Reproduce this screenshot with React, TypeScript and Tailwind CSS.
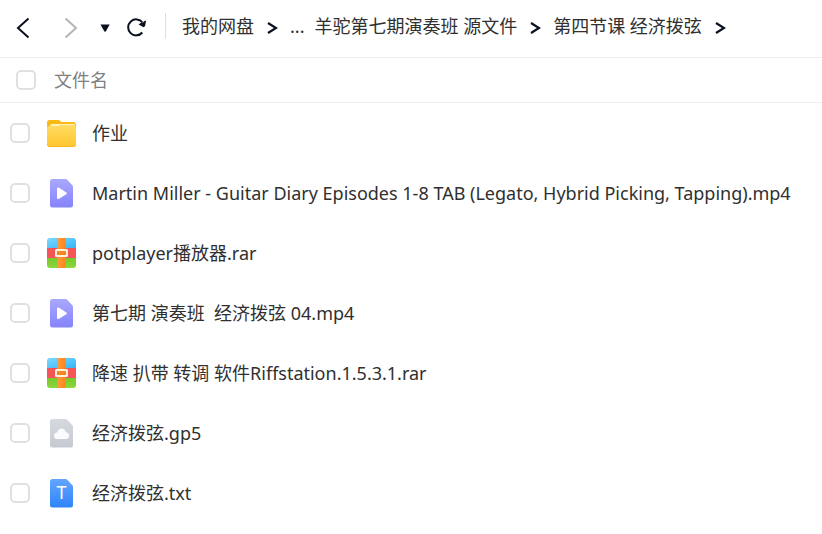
import { useState } from "react";

type FileKind = "folder" | "video" | "archive" | "unknown" | "text";

interface FileItem {
  name: string;
  kind: FileKind;
}

const FILES: FileItem[] = [
  { name: "作业", kind: "folder" },
  { name: "Martin Miller - Guitar Diary Episodes 1-8 TAB (Legato, Hybrid Picking, Tapping).mp4", kind: "video" },
  { name: "potplayer播放器.rar", kind: "archive" },
  { name: "第七期 演奏班  经济拨弦 04.mp4", kind: "video" },
  { name: "降速 扒带 转调 软件Riffstation.1.5.3.1.rar", kind: "archive" },
  { name: "经济拨弦.gp5", kind: "unknown" },
  { name: "经济拨弦.txt", kind: "text" },
];

const PAGE_SHAPE = "M6.500 1H19.500a2 2 0 0 1 1.500.6l5.400 5.600a2 2 0 0 1 .6 1.500V27a2.500 2.500 0 0 1-2.500 2.500h-18A2.500 2.500 0 0 1 4 27V3.500A2.500 2.500 0 0 1 6.500 1z";

const FolderIcon = () => (
  <svg viewBox="0 0 30 30" className="size-[30px] shrink-0" aria-hidden="true">
    <defs>
      <linearGradient id="folder-front" x1="0" y1="0" x2="0" y2="1">
        <stop offset="0" stopColor="#ffdc62" />
        <stop offset="1" stopColor="#ffc52e" />
      </linearGradient>
    </defs>
    <path d="M1 4.500A2.500 2.500 0 0 1 3.500 2h9c1.500 0 2 2 3.500 2h11a3 3 0 0 1 3 3v8H1z" fill="#fbb914" />
    <path d="M4 8a2 2 0 0 1 2-2h21.500A1.500 1.500 0 0 1 29 7.500V11H4z" fill="#fff0c0" />
    <path d="M1 10.500A2.500 2.500 0 0 1 3.500 8H12c1.500 0 2-1 3.500-1H27a3 3 0 0 1 3 3v16a3 3 0 0 1-3 3H4a3 3 0 0 1-3-3z" fill="url(#folder-front)" />
    <path d="M1 25.500V26a3 3 0 0 0 3 3h23a3 3 0 0 0 3-3v-.5a3 3 0 0 1-3 2.500H4a3 3 0 0 1-3-2.500z" fill="#f9b51c" />
  </svg>
);

const VideoIcon = () => (
  <svg viewBox="0 0 30 30" className="size-[30px] shrink-0" aria-hidden="true">
    <defs>
      <linearGradient id="video-page" x1="0" y1="0" x2="0" y2="1">
        <stop offset="0" stopColor="#a9a8ff" />
        <stop offset="1" stopColor="#8583fb" />
      </linearGradient>
    </defs>
    <path d={PAGE_SHAPE} fill="url(#video-page)" />
    <path d="M11 10.500v9.500c0 1 .9 1.400 1.700.9l7.600-4.700c.7-.5.7-1.300 0-1.800l-7.600-4.800c-.8-.5-1.700-.1-1.700.9z" fill="#fff" />
  </svg>
);

const ArchiveIcon = () => (
  <svg viewBox="0 0 30 30" className="size-[30px] shrink-0" aria-hidden="true">
    <defs>
      <clipPath id="archive-clip">
        <rect x="1" y="0" width="29" height="30" rx="3" />
      </clipPath>
      <linearGradient id="archive-top" x1="0" y1="0" x2="1" y2="1">
        <stop offset="0" stopColor="#7bd8ff" />
        <stop offset="1" stopColor="#35b5f5" />
      </linearGradient>
      <linearGradient id="archive-bottom" x1="0" y1="0" x2="0" y2="1">
        <stop offset="0" stopColor="#78c928" />
        <stop offset="1" stopColor="#8bd83c" />
      </linearGradient>
      <linearGradient id="archive-strap" x1="0" y1="0" x2="1" y2="0">
        <stop offset="0" stopColor="#ff9c3a" />
        <stop offset="1" stopColor="#fb841c" />
      </linearGradient>
    </defs>
    <g clipPath="url(#archive-clip)">
      <rect x="1" width="29" height="10" fill="url(#archive-top)" />
      <rect x="1" y="10" width="29" height="10" fill="#f55556" />
      <rect x="1" y="20" width="29" height="10" fill="url(#archive-bottom)" />
      <rect x="11.500" width="8" height="30" fill="url(#archive-strap)" />
    </g>
    <rect x="10" y="12" width="11" height="6" rx="0.500" fill="#f6861f" stroke="#fff3dc" strokeWidth="2" />
  </svg>
);

const UnknownIcon = () => (
  <svg viewBox="0 0 30 30" className="size-[30px] shrink-0" aria-hidden="true">
    <defs>
      <linearGradient id="unknown-page" x1="0" y1="0" x2="0" y2="1">
        <stop offset="0" stopColor="#d5d9df" />
        <stop offset="1" stopColor="#c5c9d2" />
      </linearGradient>
    </defs>
    <path d={PAGE_SHAPE} fill="url(#unknown-page)" />
    <path d="M11 21a3.300 3.300 0 0 1-.4-6.500 1.500 1.500 0 0 0 1-1 4.200 4.200 0 0 1 8 0 1.500 1.500 0 0 0 1 1A3.300 3.300 0 0 1 20 21z" fill="#fafbfc" />
  </svg>
);

const TextIcon = () => (
  <svg viewBox="0 0 30 30" className="size-[30px] shrink-0" aria-hidden="true">
    <defs>
      <linearGradient id="text-page" x1="0" y1="0" x2="0" y2="1">
        <stop offset="0" stopColor="#63a5ff" />
        <stop offset="1" stopColor="#2f84f8" />
      </linearGradient>
    </defs>
    <path d={PAGE_SHAPE} fill="url(#text-page)" />
    <text x="15.500" y="21" textAnchor="middle" fill="#fff" fontSize="18" fontFamily='"Noto Sans", sans-serif'>
      T
    </text>
  </svg>
);

const FILE_ICONS: Record<FileKind, () => React.JSX.Element> = {
  folder: FolderIcon,
  video: VideoIcon,
  archive: ArchiveIcon,
  unknown: UnknownIcon,
  text: TextIcon,
};

const CrumbArrow = () => (
  <svg viewBox="0 0 12 14" className="h-3.5 w-3 shrink-0" fill="none" stroke="#0b1020" strokeWidth="2.200" aria-hidden="true">
    <path d="M2 2l8 5-8 5" />
  </svg>
);

interface CheckProps {
  label: string;
  checked: boolean;
  onChange: () => void;
}

const Check = ({ label, checked, onChange }: CheckProps) => (
  <input
    type="checkbox"
    aria-label={label}
    checked={checked}
    onChange={onChange}
    className="size-5 shrink-0 cursor-pointer appearance-none rounded-[5px] border-2 border-[#e0e0e0] bg-white checked:border-[#06a7ff] checked:bg-[#06a7ff]"
  />
);

export default function App() {
  const [selected, setSelected] = useState<string[]>([]);
  const allSelected = selected.length === FILES.length;

  const toggle = (name: string) => {
    setSelected((prev) => (prev.includes(name) ? prev.filter((n) => n !== name) : [...prev, name]));
  };

  return (
    <div className="min-h-screen overflow-x-hidden bg-white font-['Noto_Sans','Noto_Sans_CJK_SC',sans-serif] text-lg leading-6 text-[#303030]">
      <header className="flex h-[58px] items-center border-b border-[#ececec] pl-4 pb-1.5">
        <div className="flex items-center pt-1">
          <button type="button" aria-label="后退" className="cursor-pointer">
            <svg viewBox="0 0 14 22" className="h-[22px] w-3.5" fill="none" stroke="#0b1020" strokeWidth="2">
              <path d="M12.500 1.500L2 11l10.500 9.500" />
            </svg>
          </button>
          <button type="button" aria-label="前进" disabled className="ml-[34px]">
            <svg viewBox="0 0 14 22" className="h-[22px] w-3.5" fill="none" stroke="#b5b5b5" strokeWidth="2">
              <path d="M1.500 1.500L12 11 1.500 20.500" />
            </svg>
          </button>
          <button type="button" aria-label="历史记录" className="ml-5 cursor-pointer">
            <svg viewBox="0 0 14 10" className="h-2.5 w-3.5" fill="#0b1020">
              <path d="M2.500 1.500h9.200l-3.600 6.600a1.100 1.100 0 0 1-2 0z" />
            </svg>
          </button>
          <button type="button" aria-label="刷新" className="ml-3.5 cursor-pointer">
            <svg viewBox="0 0 22 22" className="size-[22px]" fill="none">
              <path d="M16.300 15.500A8 8 0 1 1 16.500 5.500" stroke="#0b1020" strokeWidth="2" />
              <path d="M12.600 7.600l2-1.500 2.300-.7 2.200-1.900.9.800-1 5-1.500 1z" fill="#0b1020" />
            </svg>
          </button>
        </div>
        <div className="ml-[17px] h-[26px] w-px shrink-0 bg-[#dedede]" />
        <nav aria-label="路径" className="ml-4 flex items-center whitespace-nowrap">
          <a href="#root">我的网盘</a>
          <span className="ml-3 flex pt-1">
            <CrumbArrow />
          </span>
          <a href="#more" className="ml-3">...</a>
          <a href="#parent" className="ml-2.5">羊驼第七期演奏班 源文件</a>
          <span className="ml-3 flex pt-1">
            <CrumbArrow />
          </span>
          <a href="#current" className="ml-3" aria-current="page">第四节课 经济拨弦</a>
          <span className="ml-3 flex pt-1">
            <CrumbArrow />
          </span>
        </nav>
      </header>

      <div className="flex h-[45px] items-center gap-[18px] border-b border-[#f0f0f0] pl-4 text-[#808080]">
        <Check
          label="全选"
          checked={allSelected}
          onChange={() => setSelected(allSelected ? [] : FILES.map((f) => f.name))}
        />
        <span>文件名</span>
      </div>

      <ul>
        {FILES.map((file) => {
          const Icon = FILE_ICONS[file.kind];
          return (
            <li key={file.name} className="flex h-[60px] items-center gap-4 pl-2.5">
              <Check label={file.name} checked={selected.includes(file.name)} onChange={() => toggle(file.name)} />
              <Icon />
              <span className="whitespace-pre">{file.name}</span>
            </li>
          );
        })}
      </ul>
    </div>
  );
}
